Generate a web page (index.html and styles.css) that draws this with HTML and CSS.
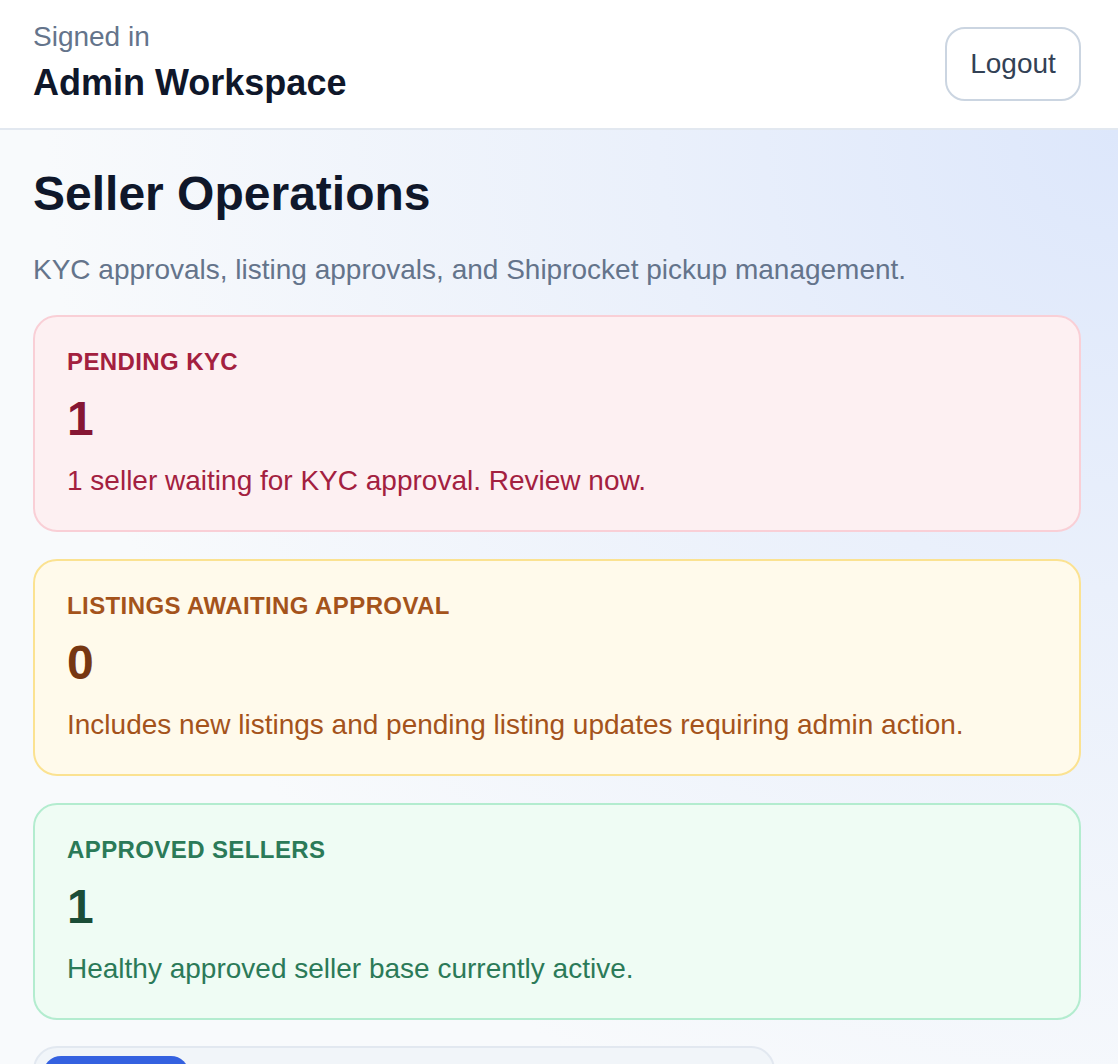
FILE: index.html
```html
<!DOCTYPE html>
<html lang="en">
<head>
  <meta charset="UTF-8">
  <title>Seller Operations</title>
  <link rel="stylesheet" href="styles.css">
</head>
<body>
  <header class="topbar">
    <div class="who">
      <p class="who-label">Signed in</p>
      <p class="who-name">Admin Workspace</p>
    </div>
    <button class="logout" type="button">Logout</button>
  </header>

  <main class="page">
    <h1>Seller Operations</h1>
    <p class="lead">KYC approvals, listing approvals, and Shiprocket pickup management.</p>

    <!-- summary cards -->
    <section class="stats">
      <div class="stat stat-red">
        <p class="stat-label">Pending KYC</p>
        <p class="stat-value">1</p>
        <p class="stat-note">1 seller waiting for KYC approval. Review now.</p>
      </div>
      <div class="stat stat-amber">
        <p class="stat-label">Listings Awaiting Approval</p>
        <p class="stat-value">0</p>
        <p class="stat-note">Includes new listings and pending listing updates requiring admin action.</p>
      </div>
      <div class="stat stat-green">
        <p class="stat-label">Approved Sellers</p>
        <p class="stat-value">1</p>
        <p class="stat-note">Healthy approved seller base currently active.</p>
      </div>
    </section>

    <!-- section tabs -->
    <nav class="tabs">
      <button class="tab active" type="button">Sellers</button>
      <button class="tab" type="button">KYC</button>
      <button class="tab" type="button">Listings</button>
      <button class="tab" type="button">Pickups</button>
      <button class="tab" type="button">Orders</button>
    </nav>
  </main>
</body>
</html>
```

FILE: styles.css
```css
* { box-sizing: border-box; }
html, body { margin: 0; }
body {
  font-family: "Liberation Sans", Arial, Helvetica, sans-serif;
  background: #f8fafc;
  color: #0f172a;
}
p { margin: 0; }

/* top bar */
.topbar {
  height: 130px;
  display: flex;
  align-items: center;
  justify-content: space-between;
  padding: 0 37px 0 33px;
  background: #fff;
  border-bottom: 2px solid #e2e8f0;
}
.who { margin-bottom: 4px; }
.who-label { font-size: 28px; line-height: 36px; color: #64748b; }
.who-name { margin-top: 6px; font-size: 36px; line-height: 44px; font-weight: 700; color: #0f172a; }
.logout {
  width: 136px;
  height: 74px;
  font-family: inherit;
  font-size: 28px;
  color: #334155;
  background: #fff;
  border: 2px solid #cbd5e1;
  border-radius: 20px;
}

/* page */
.page {
  min-height: 934px;
  padding: 36px 37px 40px 33px;
  background: radial-gradient(circle at 100% 0, #dde7fb 0, #eaf0fb 30%, #f8fafc 70%);
}
h1 { margin: 0; font-size: 48px; line-height: 56px; font-weight: 700; color: #0f172a; }
.lead { margin-top: 28px; font-size: 28px; line-height: 40px; color: #64748b; }

.stats { display: flex; flex-direction: column; gap: 27px; margin-top: 25px; }
.stat {
  padding: 29px 32px 29px;
  border: 2px solid;
  border-radius: 24px;
}
.stat-label { font-size: 24px; line-height: 32px; font-weight: 700; letter-spacing: 0.4px; text-transform: uppercase; }
.stat-value { margin-top: 13px; font-size: 48px; line-height: 56px; font-weight: 700; }
.stat-note { margin-top: 14px; font-size: 28px; line-height: 40px; }

.stat-red { background: #fdf0f2; border-color: #f9cfd6; color: #a3203f; }
.stat-red .stat-value { color: #861634; }
.stat-amber { background: #fffaeb; border-color: #fbe291; color: #a4531b; }
.stat-amber .stat-value { color: #763712; }
.stat-green { background: #effcf4; border-color: #b3eccf; color: #2b7a58; }
.stat-green .stat-value { color: #1b4d37; }

/* tabs */
.tabs {
  display: inline-flex;
  margin-top: 26px;
  padding: 8px;
  background: #f1f5f9;
  border: 2px solid #e2e8f0;
  border-radius: 24px;
}
.tab {
  padding: 22px 30px 18px;
  font-family: inherit;
  font-size: 28px;
  color: #475569;
  background: none;
  border: 0;
  border-radius: 18px;
}
.tab.active { background: #3461e0; color: #fff; }
```
